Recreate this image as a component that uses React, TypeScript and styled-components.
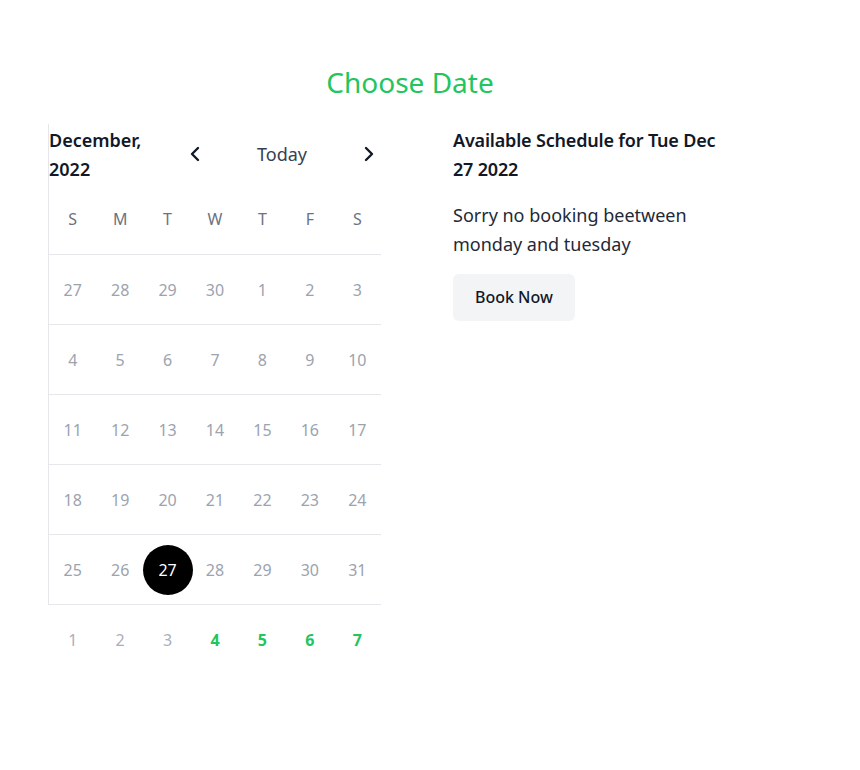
import * as React from "react"
import styled, { createGlobalStyle } from "styled-components"
import { ChevronLeft, ChevronRight } from "lucide-react"

const GlobalStyle = createGlobalStyle`
  body {
    margin: 8px;
    background: #ffffff;
    font-family: "Noto Sans", "Open Sans", sans-serif;
    color: #111827;
  }
  * {
    box-sizing: border-box;
  }
`

const Page = styled.div`
  width: 804px;
`

const Title = styled.h1`
  margin: 0;
  padding-top: 57px;
  height: 116px;
  text-align: center;
  font-size: 28px;
  line-height: 34px;
  font-weight: 400;
  color: #22c55e;
`

const Content = styled.div`
  display: flex;
  align-items: flex-start;
  gap: 72px;
  padding-left: 40px;
`

const Calendar = styled.div`
  width: 333px;
`

const Bordered = styled.div`
  border-left: 1px solid #e5e7eb;
`

const Header = styled.div`
  display: flex;
  align-items: flex-start;
  height: 60px;
  padding-top: 2px;
`

const MonthLabel = styled.div`
  width: 100px;
  font-size: 18px;
  line-height: 29px;
  font-weight: 600;
  color: #111827;
`

const Nav = styled.div`
  margin-left: auto;
  width: 198px;
  display: flex;
  align-items: center;
  justify-content: space-between;
  height: 56px;
`

const NavButton = styled.button`
  display: flex;
  align-items: center;
  justify-content: center;
  width: 24px;
  height: 24px;
  padding: 0;
  border: none;
  background: transparent;
  color: #111827;
`

const TodayLabel = styled.span`
  font-size: 18px;
  line-height: 28px;
  color: #374151;
`

const Week = styled.div<{ $divided?: boolean; $offset?: boolean }>`
  display: grid;
  grid-template-columns: repeat(7, minmax(0, 1fr));
  height: 70px;
  padding-left: ${p => (p.$offset ? "1px" : "0")};
  border-top: ${p => (p.$divided ? "1px solid #e5e7eb" : "none")};
`

const DayName = styled.div`
  display: flex;
  align-items: center;
  justify-content: center;
  font-size: 16px;
  color: #6b7280;
`

const Cell = styled.div`
  display: flex;
  align-items: center;
  justify-content: center;
`

const DayNumber = styled.span<{ $tone: "muted" | "faint" | "green" | "selected" }>`
  display: flex;
  flex: none;
  align-items: center;
  justify-content: center;
  width: 50px;
  height: 50px;
  border-radius: 50%;
  font-size: 16px;
  font-weight: ${p => (p.$tone === "green" ? 700 : 400)};
  color: ${p =>
    p.$tone === "green"
      ? "#22c55e"
      : p.$tone === "selected"
      ? "#ffffff"
      : p.$tone === "faint"
      ? "#a9afba"
      : "#9ca3af"};
  background: ${p => (p.$tone === "selected" ? "#000000" : "transparent")};
`

const Schedule = styled.div`
  width: 280px;
  padding-top: 2px;
`

const ScheduleTitle = styled.h2`
  margin: 0;
  font-size: 18px;
  line-height: 29px;
  font-weight: 600;
  color: #111827;
  letter-spacing: -0.01em;
`

const Notice = styled.p`
  margin: 17px 0 0;
  font-size: 18px;
  line-height: 29px;
  color: #1f2937;
`

const BookButton = styled.button`
  margin-top: 15px;
  padding: 12px 22px;
  border: none;
  border-radius: 6px;
  background: #f3f4f6;
  font-family: inherit;
  font-size: 16px;
  line-height: 23px;
  font-weight: 500;
  color: #111827;
`

type Day = { n: number; tone: "muted" | "faint" | "green" | "selected" }

const weeks: Day[][] = [
  [27, 28, 29, 30, 1, 2, 3],
  [4, 5, 6, 7, 8, 9, 10],
  [11, 12, 13, 14, 15, 16, 17],
  [18, 19, 20, 21, 22, 23, 24],
  [25, 26, 27, 28, 29, 30, 31],
].map((w, wi) =>
  w.map(n => ({ n, tone: wi === 4 && n === 27 ? "selected" : "muted" }))
)

const lastWeek: Day[] = [1, 2, 3, 4, 5, 6, 7].map(n => ({
  n,
  tone: n > 3 ? "green" : "faint",
}))

const dayNames = ["S", "M", "T", "W", "T", "F", "S"]

const WeekRow = ({ days, offset }: { days: Day[]; offset?: boolean }) => (
  <Week $divided $offset={offset}>
    {days.map((d, i) => (
      <Cell key={i}>
        <DayNumber $tone={d.tone}>{d.n}</DayNumber>
      </Cell>
    ))}
  </Week>
)

export default function App() {
  return (
    <Page>
      <GlobalStyle />
      <Title>Choose Date</Title>
      <Content>
        <Calendar>
          <Bordered>
            <Header>
              <MonthLabel>December, 2022</MonthLabel>
              <Nav>
                <NavButton aria-label="previous month">
                  <ChevronLeft size={24} strokeWidth={2.4} />
                </NavButton>
                <TodayLabel>Today</TodayLabel>
                <NavButton aria-label="next month">
                  <ChevronRight size={24} strokeWidth={2.4} />
                </NavButton>
              </Nav>
            </Header>
            <Week>
              {dayNames.map((d, i) => (
                <DayName key={i}>{d}</DayName>
              ))}
            </Week>
            {weeks.map((w, i) => (
              <WeekRow key={i} days={w} />
            ))}
          </Bordered>
          <WeekRow days={lastWeek} offset />
        </Calendar>
        <Schedule>
          <ScheduleTitle>Available Schedule for Tue Dec 27 2022</ScheduleTitle>
          <Notice>Sorry no booking beetween monday and tuesday</Notice>
          <BookButton>Book Now</BookButton>
        </Schedule>
      </Content>
    </Page>
  )
}
